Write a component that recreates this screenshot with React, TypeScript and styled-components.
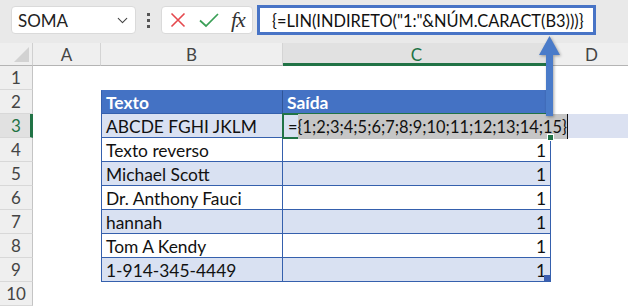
import styled, { createGlobalStyle, css } from 'styled-components';
import { ChevronDown } from 'lucide-react';

const rows = [
  { text: 'ABCDE FGHI JKLM', value: '' },
  { text: 'Texto reverso', value: '1' },
  { text: 'Michael Scott', value: '1' },
  { text: 'Dr. Anthony Fauci', value: '1' },
  { text: 'hannah', value: '1' },
  { text: 'Tom A Kendy', value: '1' },
  { text: '1-914-345-4449', value: '1' },
];

const GlobalStyle = createGlobalStyle`
  html, body {
    margin: 0;
    padding: 0;
    background: #fff;
  }
  body {
    font-family: Lato, 'Liberation Sans', sans-serif;
  }
`;

const Page = styled.div`
  position: relative;
  width: 628px;
  height: 306px;
  overflow: hidden;
  background: #fff;
`;

const Toolbar = styled.div`
  height: 43px;
  box-sizing: border-box;
  background: #e9e9e9;
  display: flex;
  align-items: flex-start;
  padding: 5px 0 0 11px;
`;

const NameBox = styled.div`
  width: 125px;
  height: 28px;
  margin-top: 1px;
  box-sizing: border-box;
  background: #fff;
  border: 1px solid #dadada;
  border-radius: 4px;
  display: flex;
  align-items: center;
  justify-content: space-between;
  padding: 0 4px 0 6px;
  font-size: 17px;
  color: #222;
`;

const Dots = styled.div`
  margin: 8px 0 0 11px;
  display: flex;
  flex-direction: column;
  gap: 3px;

  span {
    width: 3px;
    height: 3px;
    background: #555;
  }
`;

const FxBox = styled.div`
  width: 92px;
  height: 28px;
  margin: 1px 0 0 11px;
  box-sizing: border-box;
  background: #fff;
  border: 1px solid #dadada;
  border-radius: 4px;
  display: flex;
  align-items: center;
  padding-left: 8px;
  gap: 13px;
`;

const FxLabel = styled.span`
  font-family: 'Liberation Serif', serif;
  font-style: italic;
  font-size: 22px;
  color: #333;
  margin-left: -1px;
  letter-spacing: -1px;
`;

const FormulaBox = styled.div`
  width: 339px;
  height: 30px;
  margin-left: 4px;
  box-sizing: border-box;
  background: #fff;
  border: 3px solid #4874c6;
  display: flex;
  align-items: center;
  padding-left: 12px;
  font-size: 16.4px;
  color: #111;
  white-space: nowrap;
`;

const Sheet = styled.div`
  display: grid;
  grid-template-columns: 33px 68px 182px 268px 82px;
  grid-template-rows: 23px repeat(10, 24px);
`;

const Corner = styled.div`
  background: #efefef;
  border-right: 1px solid #d0d0d0;
  border-bottom: 1px solid #b4b4b4;
  box-sizing: border-box;
  position: relative;

  &::after {
    content: '';
    position: absolute;
    right: 3px;
    bottom: 3px;
    border-style: solid;
    border-width: 0 0 15px 15px;
    border-color: transparent transparent #d2d2d2 transparent;
  }
`;

const ColHeader = styled.div<{ $active?: boolean }>`
  background: #efefef;
  border-right: 1px solid #d4d4d4;
  border-bottom: 1px solid #b4b4b4;
  box-sizing: border-box;
  display: flex;
  align-items: center;
  justify-content: center;
  font-size: 17px;
  color: #444;

  ${(p) =>
    p.$active &&
    css`
      background: #e1e1e1;
      color: #217346;
      border-bottom: 3px solid #217346;
      padding-top: 2px;
    `}
`;

const RowHeader = styled.div<{ $active?: boolean }>`
  background: #efefef;
  border-right: 1px solid #c4c4c4;
  border-bottom: 1px solid #d8d8d8;
  box-sizing: border-box;
  display: flex;
  align-items: center;
  justify-content: center;
  font-size: 17px;
  color: #444;

  ${(p) =>
    p.$active &&
    css`
      background: #e1e1e1;
      color: #217346;
      border-right: 3px solid #217346;
      padding-left: 2px;
    `}
`;

const Cell = styled.div<{ $fill?: string }>`
  background: ${(p) => p.$fill || '#fff'};
`;

type TableCellProps = {
  $kind: 'head' | 'band' | 'plain';
  $first?: boolean;
  $num?: boolean;
};

const TableCell = styled.div<TableCellProps>`
  position: relative;
  box-sizing: border-box;
  display: flex;
  align-items: center;
  justify-content: ${(p) => (p.$num ? 'flex-end' : 'flex-start')};
  padding: 1px 4px 0 4px;
  font-size: 17.4px;
  color: #111;
  white-space: nowrap;
  background: ${(p) => (p.$kind === 'head' ? '#4472c4' : p.$kind === 'band' ? '#d9e1f2' : '#fff')};
  border-bottom: 1px solid #3560ad;
  border-right: 1px solid ${(p) => (p.$kind === 'head' ? '#2f5597' : '#3560ad')};
  ${(p) =>
    p.$first &&
    css`
      border-left: 1px solid #3560ad;
    `}
  ${(p) =>
    p.$kind === 'head' &&
    css`
      color: #fff;
      font-weight: 700;
      border-top: 1px solid #4472c4;
    `}
`;

const ActiveCell = styled.div`
  position: relative;
  z-index: 2;
  box-sizing: border-box;
  margin: -1px 0 -1px -1px;
  border: 2px solid #217346;
  border-right: none;
  background: #d9e1f2;
  display: flex;
  align-items: center;
  padding-left: 4px;
  font-size: 16.4px;
  color: #111;
  white-space: nowrap;
`;

const Selected = styled.span`
  background: #c6c6c6;
  padding: 3px 0;
  border-right: 1px solid #111;
`;

const FillHandle = styled.span`
  position: absolute;
  right: -3px;
  bottom: -4px;
  width: 5px;
  height: 5px;
  background: #217346;
  border: 1px solid #fff;
`;

const ResizeHandle = styled.span`
  position: absolute;
  right: 0;
  bottom: 0;
  width: 6px;
  height: 6px;
  background: #3b5eb0;
`;

const Arrow = styled.svg`
  position: absolute;
  left: 537px;
  top: 35px;
  z-index: 5;
  filter: drop-shadow(1px 1px 1.5px rgba(0, 0, 0, 0.35));
`;

function CancelIcon() {
  return (
    <svg width='16' height='16' viewBox='0 0 16 16'>
      <path d='M1.5 1.5 L14.5 14.5 M14.5 1.5 L1.5 14.5' stroke='#e5484d' strokeWidth='1.6' fill='none' />
    </svg>
  );
}

function EnterIcon() {
  return (
    <svg width='20' height='16' viewBox='0 0 20 16'>
      <path d='M1 8.5 L7 14 L19 2' stroke='#3a9f56' strokeWidth='1.7' fill='none' />
    </svg>
  );
}

export default function App() {
  return (
    <Page>
      <GlobalStyle />
      <Toolbar>
        <NameBox>
          <span>SOMA</span>
          <ChevronDown size={17} strokeWidth={1.5} color='#444' />
        </NameBox>
        <Dots>
          <span />
          <span />
          <span />
        </Dots>
        <FxBox>
          <CancelIcon />
          <EnterIcon />
          <FxLabel>fx</FxLabel>
        </FxBox>
        <FormulaBox>{'{=LIN(INDIRETO("1:"&NÚM.CARACT(B3)))}'}</FormulaBox>
      </Toolbar>

      <Sheet>
        <Corner />
        <ColHeader>A</ColHeader>
        <ColHeader>B</ColHeader>
        <ColHeader $active>C</ColHeader>
        <ColHeader>D</ColHeader>

        <RowHeader>1</RowHeader>
        <Cell />
        <Cell />
        <Cell />
        <Cell />

        <RowHeader>2</RowHeader>
        <Cell />
        <TableCell $kind='head' $first>
          Texto
        </TableCell>
        <TableCell $kind='head'>Saída</TableCell>
        <Cell />

        {rows.map((r, i) => {
          const n = i + 3;
          const kind = i % 2 === 0 ? 'band' : 'plain';
          return [
            <RowHeader key={`h${n}`} $active={n === 3}>
              {n}
            </RowHeader>,
            <Cell key={`a${n}`} />,
            <TableCell key={`b${n}`} $kind={kind} $first>
              {r.text}
            </TableCell>,
            n === 3 ? (
              <ActiveCell key={`c${n}`}>
                =<Selected>{'{1;2;3;4;5;6;7;8;9;10;11;12;13;14;15}'}</Selected>
                <FillHandle />
              </ActiveCell>
            ) : (
              <TableCell key={`c${n}`} $kind={kind} $num>
                {r.value}
                {n === 9 && <ResizeHandle />}
              </TableCell>
            ),
            <Cell key={`d${n}`} $fill={n === 3 ? '#dbe1f1' : undefined} />,
          ];
        })}

        <RowHeader>10</RowHeader>
        <Cell />
        <Cell />
        <Cell />
        <Cell />
      </Sheet>

      <Arrow width='26' height='84' viewBox='0 0 26 84'>
        <path d='M12.5 1 L23 20 L16 20 L16 81 L9 81 L9 20 L2 20 Z' fill='#4a7bc9' />
      </Arrow>
    </Page>
  );
}
